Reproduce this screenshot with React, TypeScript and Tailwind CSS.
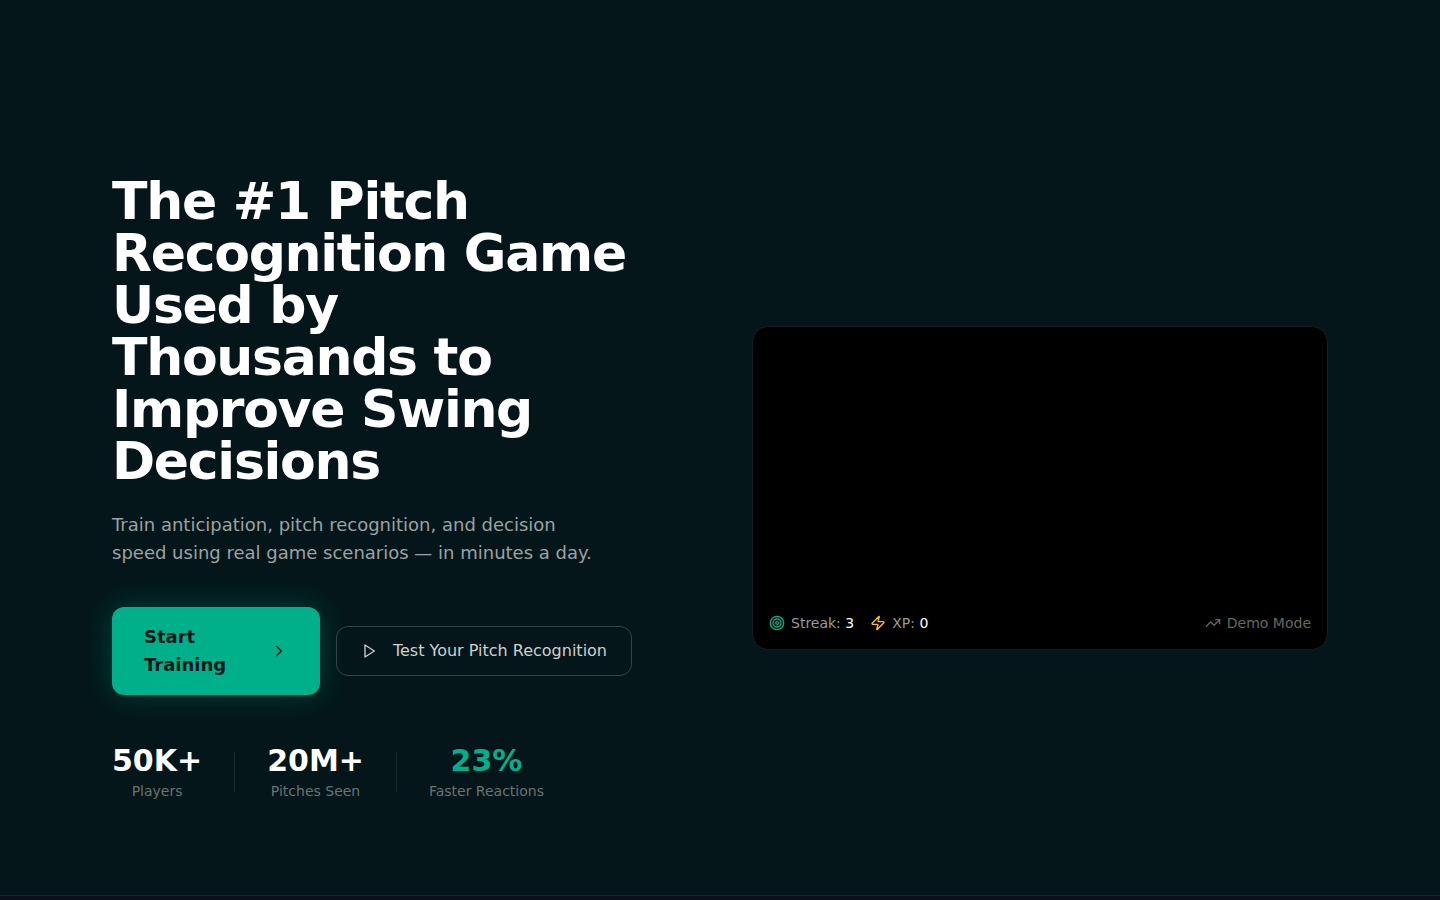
import React from 'react';
import { ChevronRight, Target, TrendingUp, Zap } from 'lucide-react';

const stats = [
  { value: '50K+', label: 'Players', color: 'text-white' },
  { value: '20M+', label: 'Pitches Seen', color: 'text-white' },
  { value: '23%', label: 'Faster Reactions', color: 'text-[#00b08b]' },
];

const PlayOutline = () => (
  <svg
    className="h-4 w-4 shrink-0"
    viewBox="0 0 24 24"
    fill="none"
    stroke="currentColor"
    strokeWidth="2"
    strokeLinecap="round"
    strokeLinejoin="round"
    aria-hidden="true"
  >
    <polygon points="6 3 20 12 6 21 6 3" />
  </svg>
);

// Demo screen with the status bar along its bottom edge
const DemoPreview = () => (
  <div className="aspect-video flex flex-col justify-end rounded-2xl border border-[#0f201f] bg-black p-4">
    <div className="flex items-center justify-between text-sm">
      <div className="flex items-center gap-4">
        <div className="flex items-center gap-1.5">
          <Target className="h-4 w-4 text-[#00b08b]" />
          <span className="text-[#999999]">
            Streak: <span className="text-white">3</span>
          </span>
        </div>
        <div className="flex items-center gap-1.5">
          <Zap className="h-4 w-4 text-[#fbbf24]" />
          <span className="text-[#999999]">
            XP: <span className="text-white">0</span>
          </span>
        </div>
      </div>
      <div className="flex items-center gap-1.5 text-[#666666]">
        <TrendingUp className="h-4 w-4" />
        <span>Demo Mode</span>
      </div>
    </div>
  </div>
);

export default function App() {
  return (
    <div className="min-h-screen bg-[#0b111c] font-['DejaVu_Sans',sans-serif]">
      <main>
        <section className="border-b border-[#1a2631] bg-[#041619]">
          <div className="mx-auto grid max-w-7xl items-center gap-16 px-8 pt-[175px] pb-[94px] lg:grid-cols-2">
            <div className="max-w-[520px]">
              <h1 className="text-[52px] leading-none font-bold tracking-tight text-white">
                The #1 Pitch Recognition Game Used by Thousands to Improve Swing Decisions
              </h1>

              <p className="mt-6 max-w-[480px] text-lg leading-7 text-[#9ba2a3]">
                Train anticipation, pitch recognition, and decision speed using real game scenarios — in minutes a day.
              </p>

              <div className="mt-10 flex items-center gap-4">
                <button className="flex w-52 items-center justify-between rounded-xl bg-[#00b08b] px-8 py-4 text-left text-lg leading-7 font-bold text-[#041619] shadow-[0_0_30px_rgba(0,176,139,0.3)] hover:bg-[#00c299]">
                  <span className="w-24">Start Training</span>
                  <ChevronRight className="h-[18px] w-[18px] shrink-0" />
                </button>
                <button className="flex items-center gap-4 rounded-xl border border-[#364446] px-6 py-3 whitespace-nowrap text-[#cdd0d1] hover:bg-white/5">
                  <PlayOutline />
                  <span>Test Your Pitch Recognition</span>
                </button>
              </div>

              <div className="mt-12 flex items-center gap-8">
                {stats.map((stat, index) => (
                  <React.Fragment key={stat.label}>
                    {index > 0 && <div className="h-10 w-px bg-[#1a2b2c]" />}
                    <div className="text-center">
                      <div className={`text-3xl font-bold ${stat.color}`}>{stat.value}</div>
                      <div className="mt-0.5 text-sm text-[#687374]">{stat.label}</div>
                    </div>
                  </React.Fragment>
                ))}
              </div>
            </div>

            <DemoPreview />
          </div>
        </section>
      </main>
    </div>
  );
}
